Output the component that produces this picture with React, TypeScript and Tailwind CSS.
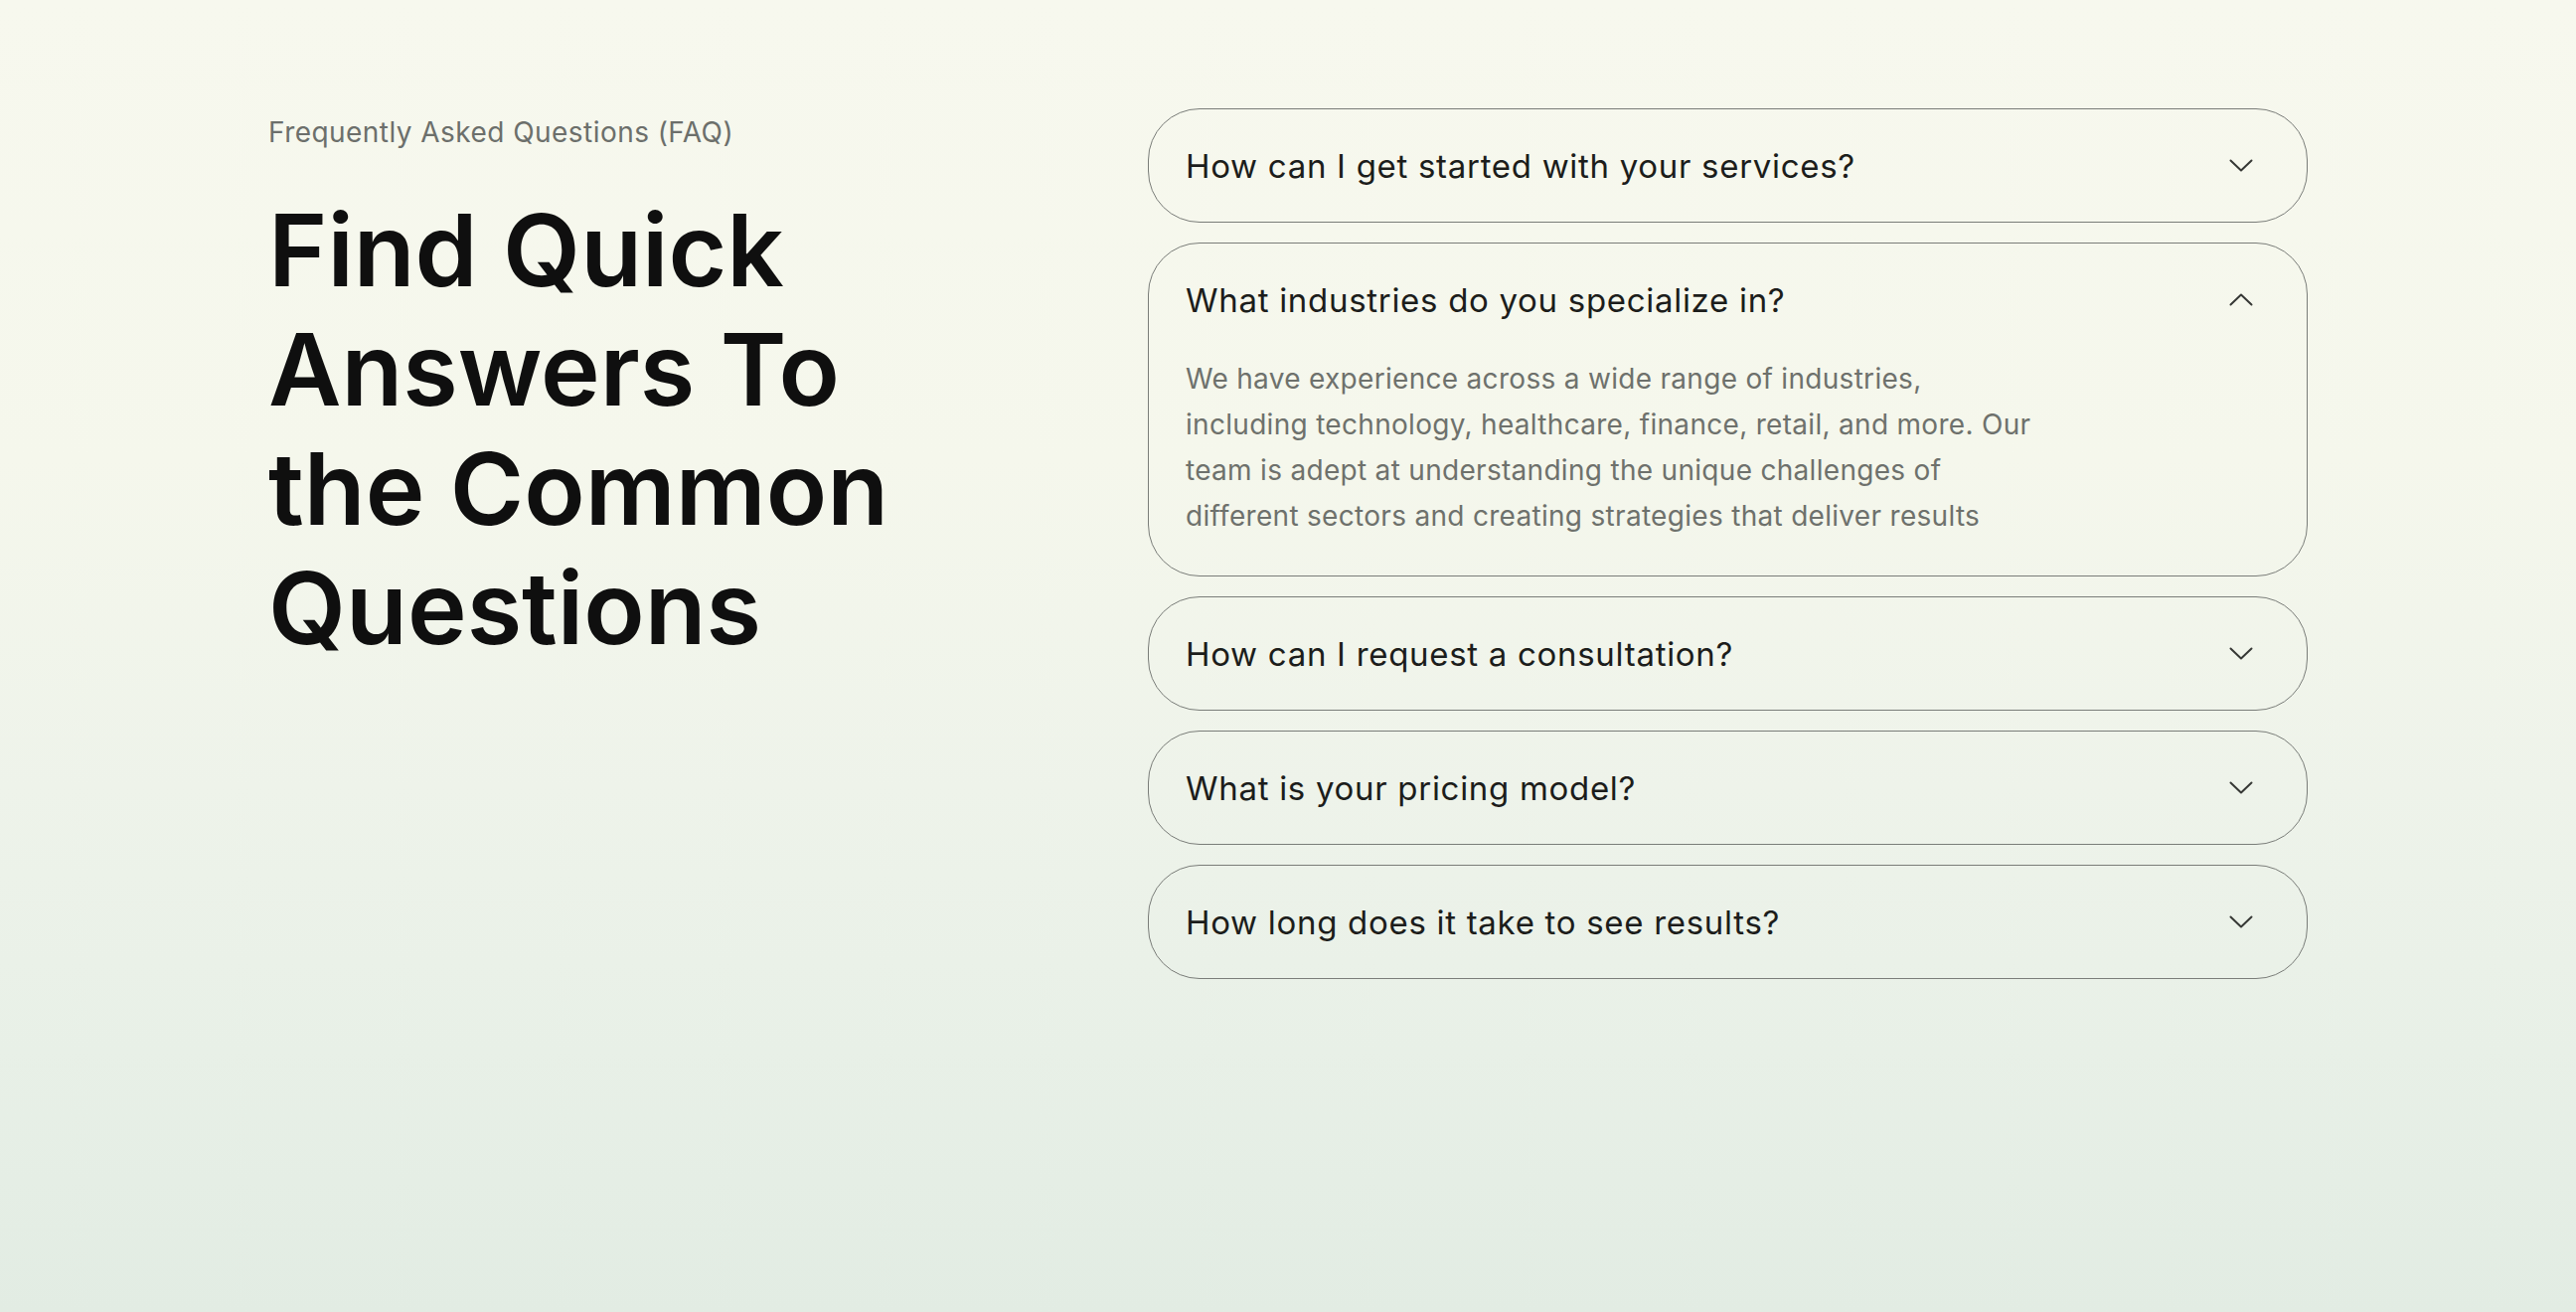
import { useState } from 'react';

const faqs = [
  {
    q: 'How can I get started with your services?',
    a: 'Getting started is easy. Reach out through our contact form or book a call, and our team will walk you through the next steps.'
  },
  {
    q: 'What industries do you specialize in?',
    a: 'We have experience across a wide range of industries, including technology, healthcare, finance, retail, and more. Our team is adept at understanding the unique challenges of different sectors and creating strategies that deliver results'
  },
  {
    q: 'How can I request a consultation?',
    a: 'Simply fill out the consultation form on our website and we will get back to you within one business day.'
  },
  {
    q: 'What is your pricing model?',
    a: 'Our pricing depends on the scope of each project. We offer flexible packages as well as custom quotes.'
  },
  {
    q: 'How long does it take to see results?',
    a: 'Most clients begin seeing measurable results within the first few months, depending on goals and strategy.'
  }
];

function Chevron({ open }: { open: boolean }) {
  return (
    <svg
      width="24"
      height="13"
      viewBox="0 0 24 13"
      fill="none"
      className={open ? 'rotate-180' : ''}
      aria-hidden
    >
      <polyline
        points="1.5,1.5 12,11.5 22.5,1.5"
        stroke="#363835"
        strokeWidth="2"
        strokeLinecap="round"
        strokeLinejoin="round"
      />
    </svg>
  );
}

export default function App() {
  const [open, setOpen] = useState<number | null>(1);

  return (
    <div className="min-h-[1320px] w-full bg-[linear-gradient(180deg,#f7f8ee_0%,#f5f7ec_35%,#eef3ea_60%,#e8f0e7_80%,#e2ece3_100%)] font-['Inter',sans-serif] overflow-hidden">
      <div className="flex px-[270px] pt-[109px]">
        <div className="w-[885px] shrink-0">
          <p className="mt-[6px] text-[28px] leading-[36px] tracking-[0.45px] text-[#6c6f6b]">
            Frequently Asked Questions (FAQ)
          </p>
          <h2 className="mt-[40px] text-[101px] leading-[120px] font-semibold text-[#0f0f0f]">
            Find Quick
            <br />
            Answers To
            <br />
            the Common
            <br />
            Questions
          </h2>
        </div>

        <div className="flex-1 flex flex-col gap-[20px]">
          {faqs.map((item, i) => {
            const isOpen = open === i;
            return (
              <div
                key={item.q}
                className="rounded-[52px] border-[1.5px] border-[#7a7d79]"
              >
                <button
                  type="button"
                  onClick={() => setOpen(isOpen ? null : i)}
                  className="w-full h-[113px] flex items-center justify-between pl-[37px] pr-[54px] text-left"
                >
                  <span className="text-[33px] leading-[40px] tracking-[0.7px] text-[#1c1d1b]">
                    {item.q}
                  </span>
                  <Chevron open={isOpen} />
                </button>
                {isOpen && (
                  <div className="pl-[37px] pb-[37px]">
                    <p className="max-w-[862px] text-[28px] leading-[46px] tracking-[0.3px] text-[#6e716c]">
                      {item.a}
                    </p>
                  </div>
                )}
              </div>
            );
          })}
        </div>
      </div>
    </div>
  );
}
